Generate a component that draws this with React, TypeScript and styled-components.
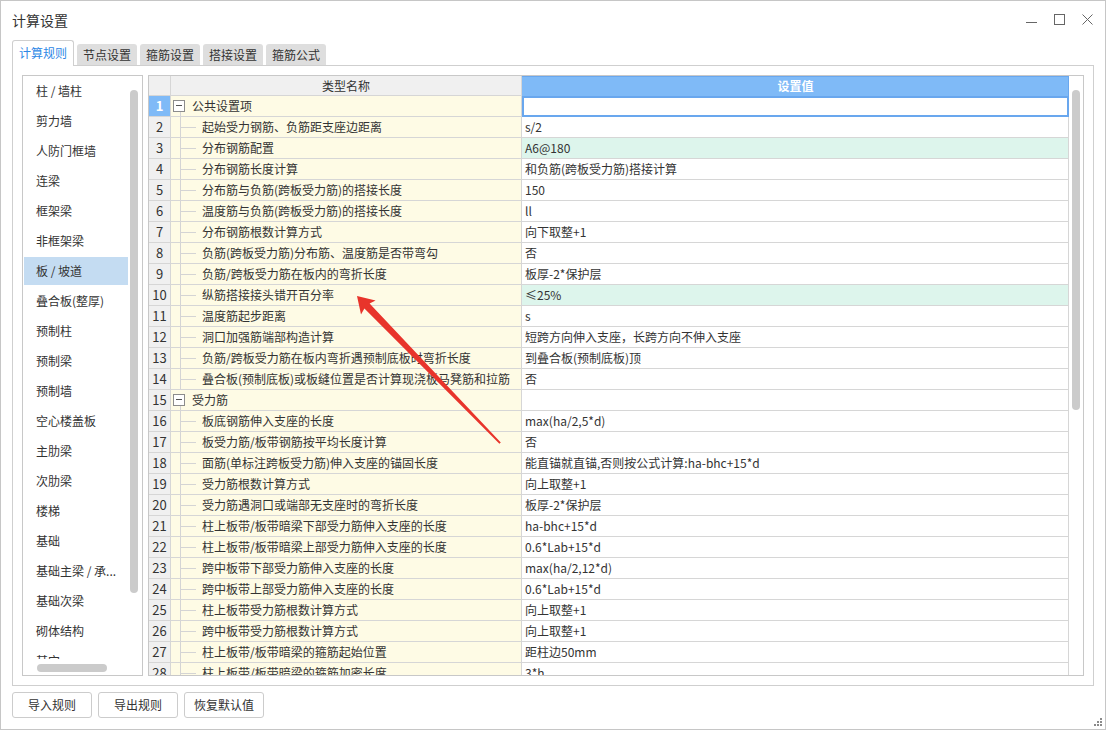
import React from "react";
import styled, { createGlobalStyle } from "styled-components";

const GlobalStyle = createGlobalStyle`
  html, body {
    margin: 0;
    padding: 0;
    background: #fff;
  }
  body {
    font-family: "Noto Sans CJK SC", "Noto Sans", sans-serif;
    color: #333;
  }
  * {
    box-sizing: border-box;
  }
`;

const LINE = "#d6d6d6";
const BLUE = "#7fbaf7";

type Row = {
  no: number;
  name: string;
  value: string;
  group?: boolean;
  green?: boolean;
};

const rows: Row[] = [
  { no: 1, name: "公共设置项", value: "", group: true },
  { no: 2, name: "起始受力钢筋、负筋距支座边距离", value: "s/2" },
  { no: 3, name: "分布钢筋配置", value: "A6@180", green: true },
  { no: 4, name: "分布钢筋长度计算", value: "和负筋(跨板受力筋)搭接计算" },
  { no: 5, name: "分布筋与负筋(跨板受力筋)的搭接长度", value: "150" },
  { no: 6, name: "温度筋与负筋(跨板受力筋)的搭接长度", value: "ll" },
  { no: 7, name: "分布钢筋根数计算方式", value: "向下取整+1" },
  { no: 8, name: "负筋(跨板受力筋)分布筋、温度筋是否带弯勾", value: "否" },
  { no: 9, name: "负筋/跨板受力筋在板内的弯折长度", value: "板厚-2*保护层" },
  { no: 10, name: "纵筋搭接接头错开百分率", value: "≤25%", green: true },
  { no: 11, name: "温度筋起步距离", value: "s" },
  { no: 12, name: "洞口加强筋端部构造计算", value: "短跨方向伸入支座，长跨方向不伸入支座" },
  { no: 13, name: "负筋/跨板受力筋在板内弯折遇预制底板时弯折长度", value: "到叠合板(预制底板)顶" },
  { no: 14, name: "叠合板(预制底板)或板缝位置是否计算现浇板马凳筋和拉筋", value: "否" },
  { no: 15, name: "受力筋", value: "", group: true },
  { no: 16, name: "板底钢筋伸入支座的长度", value: "max(ha/2,5*d)" },
  { no: 17, name: "板受力筋/板带钢筋按平均长度计算", value: "否" },
  { no: 18, name: "面筋(单标注跨板受力筋)伸入支座的锚固长度", value: "能直锚就直锚,否则按公式计算:ha-bhc+15*d" },
  { no: 19, name: "受力筋根数计算方式", value: "向上取整+1" },
  { no: 20, name: "受力筋遇洞口或端部无支座时的弯折长度", value: "板厚-2*保护层" },
  { no: 21, name: "柱上板带/板带暗梁下部受力筋伸入支座的长度", value: "ha-bhc+15*d" },
  { no: 22, name: "柱上板带/板带暗梁上部受力筋伸入支座的长度", value: "0.6*Lab+15*d" },
  { no: 23, name: "跨中板带下部受力筋伸入支座的长度", value: "max(ha/2,12*d)" },
  { no: 24, name: "跨中板带上部受力筋伸入支座的长度", value: "0.6*Lab+15*d" },
  { no: 25, name: "柱上板带受力筋根数计算方式", value: "向上取整+1" },
  { no: 26, name: "跨中板带受力筋根数计算方式", value: "向上取整+1" },
  { no: 27, name: "柱上板带/板带暗梁的箍筋起始位置", value: "距柱边50mm" },
  { no: 28, name: "柱上板带/板带暗梁的箍筋加密长度", value: "3*h" },
];

const categories = [
  "柱 / 墙柱",
  "剪力墙",
  "人防门框墙",
  "连梁",
  "框架梁",
  "非框架梁",
  "板 / 坡道",
  "叠合板(整厚)",
  "预制柱",
  "预制梁",
  "预制墙",
  "空心楼盖板",
  "主肋梁",
  "次肋梁",
  "楼梯",
  "基础",
  "基础主梁 / 承...",
  "基础次梁",
  "砌体结构",
  "其它",
];

const tabs = ["计算规则", "节点设置", "箍筋设置", "搭接设置", "箍筋公式"];

export default function App() {
  return (
    <>
      <GlobalStyle />
      <Window>
        <TitleBar>
          <Title>计算设置</Title>
          <Controls>
            <svg width="11" height="11" viewBox="0 0 11 11">
              <line x1="0" y1="8.5" x2="11" y2="8.5" stroke="#666" strokeWidth="1" />
            </svg>
            <svg width="11" height="11" viewBox="0 0 11 11">
              <rect x="0.5" y="0.5" width="10" height="10" fill="none" stroke="#666" strokeWidth="1" />
            </svg>
            <svg width="11" height="11" viewBox="0 0 11 11">
              <path d="M0.5 0.5 L10.5 10.5 M10.5 0.5 L0.5 10.5" stroke="#666" strokeWidth="1" />
            </svg>
          </Controls>
        </TitleBar>

        <TabBar>
          {tabs.map((t, i) => (
            <Tab key={t} $active={i === 0}>
              {t}
            </Tab>
          ))}
        </TabBar>

        <Panel>
          <ListBox>
            <ListBody>
              <Items>
                {categories.map((c) => (
                  <Item key={c} $selected={c === "板 / 坡道"}>
                    {c}
                  </Item>
                ))}
              </Items>
              <VTrack>
                <VThumb $top={14} $height={503} />
              </VTrack>
            </ListBody>
            <HTrack>
              <HThumb />
            </HTrack>
          </ListBox>

          <Grid>
            <Table>
              <HeaderRow>
                <HeadNum />
                <HeadName>类型名称</HeadName>
                <HeadValue>设置值</HeadValue>
              </HeaderRow>
              {rows.map((r) => (
                <DataRow key={r.no}>
                  <NumCell $selected={r.no === 1}>{r.no}</NumCell>
                  <NameCell $group={!!r.group}>
                    {r.group ? (
                      <>
                        <Toggle />
                        <TreeStem />
                      </>
                    ) : (
                      <Branch />
                    )}
                    {r.name}
                  </NameCell>
                  <ValueCell $green={!!r.green} $editing={r.no === 1}>
                    {r.value}
                  </ValueCell>
                </DataRow>
              ))}
            </Table>
            <GridTrack>
              <VThumb $top={14} $height={320} />
            </GridTrack>
          </Grid>
        </Panel>

        <Footer>
          <Button>导入规则</Button>
          <Button>导出规则</Button>
          <Button>恢复默认值</Button>
          <Grip width="8" height="8" viewBox="0 0 8 8">
            <rect x="6" y="0" width="2" height="2" fill="#8a8a8a" />
            <rect x="3" y="3" width="2" height="2" fill="#8a8a8a" />
            <rect x="6" y="3" width="2" height="2" fill="#8a8a8a" />
            <rect x="0" y="6" width="2" height="2" fill="#8a8a8a" />
            <rect x="3" y="6" width="2" height="2" fill="#8a8a8a" />
            <rect x="6" y="6" width="2" height="2" fill="#8a8a8a" />
          </Grip>
        </Footer>

        <Arrow width="1106" height="730" viewBox="0 0 1106 730">
          <polygon
            points="357,296 375.6,300.4 369.6,303.6 500.8,442.4 499.4,443.8 364.4,308.6 361,314.6"
            fill="#e8342b"
          />
        </Arrow>
      </Window>
    </>
  );
}

const Window = styled.div`
  position: relative;
  width: 1106px;
  height: 730px;
  border: 1px solid #c6c6c6;
  background: #fff;
  display: flex;
  flex-direction: column;
  overflow: hidden;
`;

const TitleBar = styled.div`
  height: 39px;
  display: flex;
  padding: 0 12px 0 11px;
`;

const Title = styled.div`
  font-size: 14px;
  line-height: 39px;
  color: #333;
`;

const Controls = styled.div`
  margin-left: auto;
  margin-top: 13px;
  display: flex;
  gap: 17px;
  height: 11px;

  svg {
    display: block;
  }
`;

const TabBar = styled.div`
  height: 25px;
  display: flex;
  align-items: flex-end;
  padding-left: 11px;
  position: relative;
  z-index: 1;
`;

const Tab = styled.div<{ $active: boolean }>`
  font-size: 12px;
  text-align: center;
  border-radius: 3px 3px 0 0;
  ${(p) =>
    p.$active
      ? `
    width: 62px;
    height: 26px;
    line-height: 24px;
    margin-bottom: -1px;
    background: #fff;
    color: #2d88e6;
    border: 1px solid #cfcfcf;
    border-bottom: none;
  `
      : `
    width: 60px;
    height: 21px;
    line-height: 21px;
    margin-left: 3px;
    background: #dedede;
    color: #333;
  `}
`;

const Panel = styled.div`
  margin-left: 11px;
  width: 1082px;
  height: 621px;
  border: 1px solid #cfcfcf;
  padding: 9px;
  display: flex;
  gap: 5px;
`;

const ListBox = styled.div`
  width: 121px;
  height: 601px;
  border: 1px solid #c8c8c8;
  display: flex;
  flex-direction: column;
`;

const ListBody = styled.div`
  height: 583px;
  display: flex;
  overflow: hidden;
`;

const Items = styled.div`
  width: 105px;
  padding: 1px 0 0 1px;
  display: flex;
  flex-direction: column;
  gap: 2px;
  flex-shrink: 0;
`;

const Item = styled.div<{ $selected: boolean }>`
  height: 28px;
  flex-shrink: 0;
  padding-left: 12px;
  font-size: 12px;
  line-height: 28px;
  white-space: nowrap;
  color: #333;
  background: ${(p) => (p.$selected ? "#c4dcf2" : "transparent")};
`;

const VTrack = styled.div`
  width: 14px;
  padding-left: 2px;
`;

const VThumb = styled.div<{ $top: number; $height: number }>`
  width: 8px;
  margin-top: ${(p) => p.$top}px;
  height: ${(p) => p.$height}px;
  border-radius: 4px;
  background: #cbcbcb;
`;

const HTrack = styled.div`
  height: 16px;
  padding: 5px 0 0 14px;
`;

const HThumb = styled.div`
  width: 70px;
  height: 8px;
  border-radius: 4px;
  background: #cbcbcb;
`;

const Grid = styled.div`
  width: 936px;
  height: 601px;
  border: 1px solid #c8c8c8;
  display: flex;
  overflow: hidden;
`;

const Table = styled.div`
  width: 920px;
  display: flex;
  flex-direction: column;
  overflow: hidden;
`;

const GridTrack = styled.div`
  width: 14px;
  padding-left: 3px;
`;

const HeaderRow = styled.div`
  display: flex;
  height: 20px;
  flex-shrink: 0;
  font-size: 12px;
  line-height: 19px;
`;

const HeadNum = styled.div`
  width: 22px;
  background: #f0f0f0;
  border-right: 1px solid ${LINE};
  border-bottom: 1px solid ${LINE};
`;

const HeadName = styled.div`
  width: 351px;
  background: #f0f0f0;
  text-align: center;
  color: #333;
  border-right: 1px solid ${LINE};
  border-bottom: 1px solid ${LINE};
`;

const HeadValue = styled.div`
  flex: 1;
  background: ${BLUE};
  text-align: center;
  color: #fff;
  font-weight: bold;
  box-shadow: inset -1px 0 0 #69a7ee, inset 0 1px 0 #69a7ee;
`;

const DataRow = styled.div`
  display: flex;
  height: 21px;
  flex-shrink: 0;
  font-size: 12px;
  line-height: 20px;
  color: #333;
`;

const NumCell = styled.div<{ $selected: boolean }>`
  width: 22px;
  text-align: center;
  font-size: 13px;
  border-right: 1px solid ${LINE};
  border-bottom: 1px solid ${LINE};
  background: ${(p) => (p.$selected ? BLUE : "#f0f0f0")};
  color: ${(p) => (p.$selected ? "#fff" : "#333")};
  font-weight: ${(p) => (p.$selected ? "bold" : "normal")};
`;

const NameCell = styled.div<{ $group: boolean }>`
  position: relative;
  width: 351px;
  padding-left: ${(p) => (p.$group ? 21 : 31)}px;
  background: #fefbe5;
  border-right: 1px solid ${LINE};
  border-bottom: 1px solid ${LINE};
  white-space: nowrap;
  overflow: hidden;
`;

const Branch = styled.span`
  position: absolute;
  left: 9px;
  top: 0;
  bottom: -1px;
  width: 15px;
  border-left: 1px solid #d4d4d4;

  &::after {
    content: "";
    position: absolute;
    left: 0;
    top: 10px;
    width: 15px;
    border-top: 1px solid #d4d4d4;
  }
`;

const Toggle = styled.span`
  position: absolute;
  left: 2px;
  top: 4px;
  width: 12px;
  height: 12px;
  border: 1px solid #8c8c8c;
  background: #fff;

  &::after {
    content: "";
    position: absolute;
    left: 2px;
    top: 4px;
    width: 6px;
    border-top: 1px solid #555;
  }
`;

const TreeStem = styled.span`
  position: absolute;
  left: 9px;
  top: 16px;
  bottom: -1px;
  border-left: 1px solid #d4d4d4;
`;

const ValueCell = styled.div<{ $green: boolean; $editing: boolean }>`
  flex: 1;
  padding-left: 3px;
  white-space: nowrap;
  overflow: hidden;
  border-right: 1px solid ${LINE};
  border-bottom: 1px solid ${LINE};
  background: ${(p) => (p.$green ? "#ddf5ec" : "#fff")};
  ${(p) =>
    p.$editing &&
    `
    border-right: none;
    border-bottom: none;
    box-shadow: inset 0 0 0 2px #69a7ee;
  `}
`;

const Footer = styled.div`
  flex: 1;
  display: flex;
  align-items: flex-start;
  gap: 6px;
  padding: 6px 3px 0 11px;
`;

const Button = styled.div`
  width: 80px;
  height: 26px;
  border: 1px solid #cccccc;
  border-radius: 3px;
  background: #fff;
  font-size: 12px;
  line-height: 24px;
  text-align: center;
  color: #333;
`;

const Grip = styled.svg`
  display: block;
  margin-left: auto;
  align-self: flex-end;
  margin-bottom: 3px;
`;

const Arrow = styled.svg`
  position: absolute;
  left: -1px;
  top: -1px;
  pointer-events: none;
`;
